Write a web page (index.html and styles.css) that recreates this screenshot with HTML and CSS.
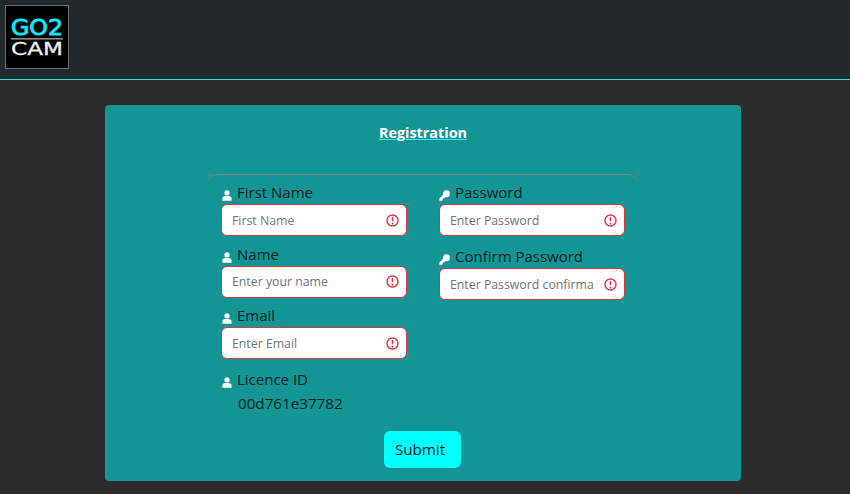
FILE: index.html
```html
<!DOCTYPE html>
<html lang="en">
<head>
<meta charset="utf-8">
<title>Registration</title>
<link rel="stylesheet" href="styles.css">
</head>
<body>
<svg class="defs" width="0" height="0" aria-hidden="true">
  <symbol id="user" viewBox="0 0 10 11"><circle cx="5" cy="2.9" r="2.6" fill="#fff"/><path d="M0.4 10.8V8.6C0.4 6.9 1.8 6 3.2 6h3.6c1.4 0 2.8.9 2.8 2.6v2.2z" fill="#fff"/></symbol>
  <symbol id="key" viewBox="0 0 11 11"><path d="M7.4 0.2a3.4 3.4 0 0 1 3.4 3.4 3.4 3.4 0 0 1-3.4 3.6 3.4 3.4 0 0 1-1.1-.2L5 8.4H3.8v1.3l-1 1H.4V8.5l3.8-3.7a3.4 3.4 0 0 1 3.2-4.6z" fill="#fff"/></symbol>
  <symbol id="alert" viewBox="0 0 12 12"><circle cx="6" cy="6" r="5.1" fill="none" stroke="#dc3545" stroke-width="1.3"/><rect x="5.25" y="2.7" width="1.5" height="4.1" rx=".7" fill="#dc3545"/><circle cx="6" cy="8.7" r=".9" fill="#dc3545"/></symbol>
</svg>
<header class="topbar">
  <svg class="logo" viewBox="0 0 62 62" role="img" aria-label="GO2 CAM">
    <text class="logo-top" x="5" y="29" textLength="52" lengthAdjust="spacingAndGlyphs">GO2</text>
    <rect class="logo-bar" x="5" y="32" width="52" height="1.6"/>
    <text class="logo-bottom" x="5" y="49" textLength="52" lengthAdjust="spacingAndGlyphs">CAM</text>
  </svg>
</header>
<main class="page">
  <form class="card">
    <h1 class="title">Registration</h1>
    <div class="divider">
      <div class="column">
        <div class="field">
          <label class="label"><svg class="icon"><use href="#user"/></svg>First Name</label>
          <div class="control"><input class="input" placeholder="First Name"><svg class="alert"><use href="#alert"/></svg></div>
        </div>
        <div class="field">
          <label class="label"><svg class="icon"><use href="#user"/></svg>Name</label>
          <div class="control"><input class="input" placeholder="Enter your name"><svg class="alert"><use href="#alert"/></svg></div>
        </div>
        <div class="field">
          <label class="label"><svg class="icon"><use href="#user"/></svg>Email</label>
          <div class="control"><input class="input" placeholder="Enter Email"><svg class="alert"><use href="#alert"/></svg></div>
        </div>
        <div class="field licence">
          <label class="label"><svg class="icon"><use href="#user"/></svg>Licence ID</label>
          <div class="licence-value">00d761e37782</div>
        </div>
      </div>
      <div class="column wide">
        <div class="field">
          <label class="label"><svg class="icon icon-key"><use href="#key"/></svg>Password</label>
          <div class="control"><input class="input" type="password" placeholder="Enter Password"><svg class="alert"><use href="#alert"/></svg></div>
        </div>
        <div class="field">
          <label class="label"><svg class="icon icon-key"><use href="#key"/></svg>Confirm Password</label>
          <div class="control"><input class="input" type="password" placeholder="Enter Password confirmation"><svg class="alert"><use href="#alert"/></svg></div>
        </div>
      </div>
    </div>
    <div class="actions"><button class="submit" type="button">Submit</button></div>
  </form>
</main>
</body>
</html>
```
FILE: styles.css
```css
* { box-sizing: border-box; }
html, body { margin: 0; height: 100%; }
body {
  background: #2b2b2b;
  font-family: "Open Sans", "Noto Sans", sans-serif;
  color: #062325;
  overflow: hidden;
}
.defs { position: absolute; }
.topbar {
  height: 80px;
  padding: 5px;
  background: #23282c;
  border-bottom: 1px solid #20e8e8;
}
.logo {
  display: block;
  width: 64px;
  height: 64px;
  background: #000;
  border: 1px solid #6c6c6c;
}
.logo-top {
  fill: #00eeff;
  stroke: #00eeff;
  stroke-width: .8px;
  font: 400 22px "DejaVu Sans", sans-serif;
}
.logo-bottom {
  fill: #f2f2f2;
  stroke: #f2f2f2;
  stroke-width: .3px;
  font: 400 18px "DejaVu Sans", sans-serif;
}
.logo-bar { fill: #8a8a8a; }
.page { padding: 25px 109px 0 105px; }
.card {
  height: 376px;
  background: #149595;
  border-radius: 4px;
  padding: 18px 0 0;
}
.title {
  margin: 0;
  text-align: center;
  color: #fff;
  font-size: 14.4px;
  line-height: 20px;
  font-weight: 700;
  text-decoration: underline;
  text-decoration-color: #20ffff;
}
.divider {
  margin: 31px 103px 0 102px;
  height: 257px;
  padding: 6px 13px 0 14px;
  border-top: 1px solid #857f78;
  border-radius: 10px 10px 0 0;
  display: grid;
  grid-template-columns: 186px 186px;
  column-gap: 32px;
  align-content: start;
}
.column { display: flex; flex-direction: column; }
.field { margin-bottom: 6.5px; }
.wide .field { margin-bottom: 9px; }
.label {
  display: flex;
  align-items: flex-end;
  font-size: 15px;
  line-height: 23px;
  height: 23px;
}
.icon { width: 10px; height: 11px; margin: 0 5px 3px 1px; flex: none; }
.icon-key { width: 11px; margin-left: 0; }
.control { position: relative; }
.input {
  display: block;
  width: 100%;
  height: 32px;
  padding: 0 30px 0 10px;
  background: #fff;
  border: 1px solid #dc3545;
  border-radius: 6px;
  font: 12.3px "Open Sans", "Noto Sans", sans-serif;
  color: #212529;
  outline: none;
}
.input::placeholder { color: #6c757d; opacity: 1; }
.alert {
  position: absolute;
  right: 8px;
  top: 9.5px;
  width: 13px;
  height: 13px;
}
.licence { margin-top: 2px; }
.licence-value {
  padding-left: 17px;
  font-size: 15.2px;
  line-height: 24px;
}
.actions { display: flex; justify-content: center; padding-right: 1px; }
.submit {
  width: 77px;
  height: 37px;
  padding: 0 5px 2px 0;
  background: #00ffff;
  border: 0;
  border-radius: 6px;
  font: 15.2px "Open Sans", "Noto Sans", sans-serif;
  color: #062325;
}
```
